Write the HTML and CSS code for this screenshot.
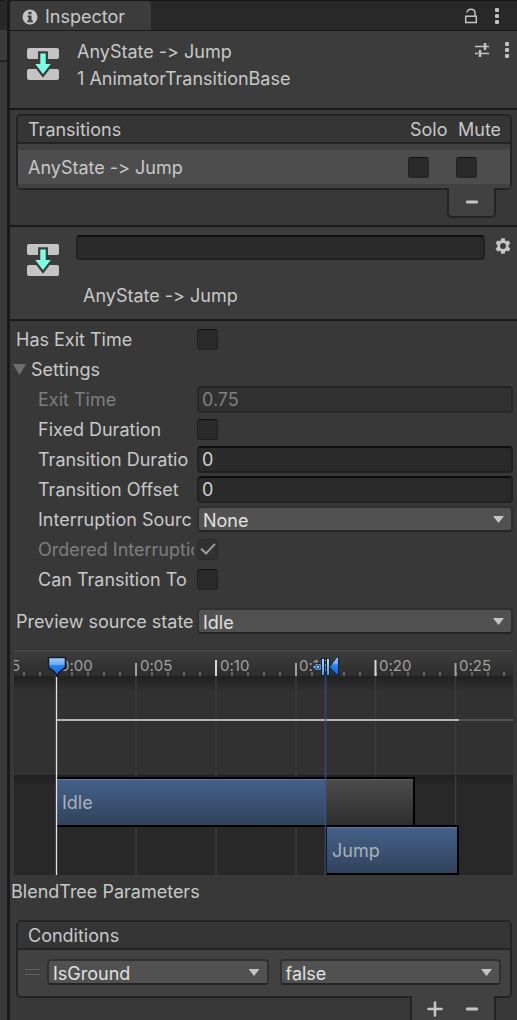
FILE: index.html
```html
<!DOCTYPE html>
<html lang="en">
<head>
<meta charset="utf-8">
<title>Inspector</title>
<link rel="stylesheet" href="styles.css">
</head>
<body>
<svg class="defs" aria-hidden="true">
  <symbol id="transition" viewBox="0 0 32 32">
    <rect width="32" height="11" rx="2" fill="#c4c4c4"/>
    <rect y="21" width="32" height="11" rx="2" fill="#c4c4c4"/>
    <path d="M13.300 5.500h5.400v10.500h5l-7.700 10-7.700-10h5z" fill="#3c3c3c" stroke="#3c3c3c" stroke-width="4.500"/>
    <path d="M13.300 5.500h5.400v10.500h5l-7.700 10-7.700-10h5z" fill="#80ffe5"/>
  </symbol>
  <symbol id="dots" viewBox="0 0 4 16">
    <rect y="0" width="4" height="4" rx="1.300" fill="#c4c4c4"/>
    <rect y="6" width="4" height="4" rx="1.300" fill="#c4c4c4"/>
    <rect y="12" width="4" height="4" rx="1.300" fill="#c4c4c4"/>
  </symbol>
</svg>
<div class="window">
  <div class="neighbour"><div class="neighbour-tab"></div><div class="neighbour-bar"></div></div>
  <main class="inspector">
    <nav class="tabs">
      <button class="tab" type="button">
        <svg width="16" height="16" viewBox="0 0 16 16"><circle cx="8" cy="8" r="7.500" fill="#c4c4c4"/><path d="M6.500 2.800h3v2.500h-3zM5.500 6.500h4v5h1.300v1.700H5.300v-1.700h1.300V8.100H5.500z" fill="#3c3c3c"/></svg>
        Inspector
      </button>
      <div class="tab-tools">
        <button class="icon" type="button" aria-label="Lock"><svg width="14" height="16" viewBox="0 0 14 16" fill="none" stroke="#c4c4c4" stroke-width="1.500"><rect x="1.700" y="8.200" width="10.600" height="6.300"/><path d="M3 4.500C3.300 2.500 5 1.200 7 1.200c2.500 0 4 1.500 4 3.800v3"/></svg></button>
        <button class="icon" type="button" aria-label="Window menu"><svg width="4" height="16"><use href="#dots"/></svg></button>
      </div>
    </nav>

    <header class="asset">
      <svg class="asset-icon" width="32" height="32"><use href="#transition"/></svg>
      <div class="asset-title"><div>AnyState -&gt; Jump</div><div>1 AnimatorTransitionBase</div></div>
      <div class="asset-tools">
        <button class="icon" type="button" aria-label="Presets"><svg width="16" height="16" viewBox="0 0 16 16" stroke="#c4c4c4" fill="none"><path d="M1 4.500h14M1 11.500h3M6 11.500h9" stroke-width="1.300"/><path d="M11 1v7M6 8v7" stroke-width="2.500"/></svg></button>
        <button class="icon" type="button" aria-label="Asset menu"><svg width="4" height="16"><use href="#dots"/></svg></button>
      </div>
    </header>

    <section class="transitions">
      <table class="list">
        <colgroup><col><col class="solo"><col class="mute"></colgroup>
        <thead><tr><th class="name">Transitions</th><th>Solo</th><th><span class="clip">Mute</span></th></tr></thead>
        <tbody><tr><td class="name">AnyState -&gt; Jump</td><td><input class="check" type="checkbox" aria-label="Solo"></td><td><input class="check" type="checkbox" aria-label="Mute"></td></tr></tbody>
      </table>
      <div class="list-buttons single"><button class="icon" type="button" aria-label="Remove transition"><svg width="14" height="14" viewBox="0 0 14 14"><rect x="1" y="5.500" width="12" height="3" rx="1" fill="#c4c4c4"/></svg></button></div>
    </section>

    <section class="transition-head">
      <svg class="asset-icon" width="32" height="32"><use href="#transition"/></svg>
      <div class="naming"><input class="text name-box" type="text" aria-label="Transition name"><div class="caption">AnyState -&gt; Jump</div></div>
      <button class="icon gear" type="button" aria-label="Settings"><svg width="16" height="16" viewBox="0 0 16 16"><path d="M6.300.3h3.400l.5 2.200 1.200.7 2.200-.7 1.700 2.900-1.700 1.600v2l1.700 1.600-1.700 2.900-2.200-.7-1.200.7-.5 2.200H6.300l-.5-2.200-1.200-.7-2.200.7-1.700-2.900L2.400 9V7L.7 5.400l1.700-2.900 2.200.7 1.200-.7zM8 5.100a2.900 2.900 0 1 0 0 5.800 2.900 2.900 0 0 0 0-5.800z" fill="#c4c4c4" fill-rule="evenodd"/></svg></button>
    </section>

    <section class="form">
      <div class="row"><label for="exit">Has Exit Time</label><input id="exit" class="check" type="checkbox"></div>
      <button class="foldout" type="button"><span class="triangle"></span>Settings</button>
      <div class="row sub off"><label for="time">Exit Time</label><input id="time" class="text" type="text" value="0.75" disabled></div>
      <div class="row sub"><label for="fixed">Fixed Duration</label><input id="fixed" class="check" type="checkbox"></div>
      <div class="row sub"><label for="duration">Transition Duratio</label><input id="duration" class="text" type="text" value="0"></div>
      <div class="row sub"><label for="offset">Transition Offset</label><input id="offset" class="text" type="text" value="0"></div>
      <div class="row sub"><label for="source">Interruption Sourc</label><div class="drop"><select id="source"><option>None</option></select></div></div>
      <div class="row sub off"><label for="ordered">Ordered Interruption</label><input id="ordered" class="check" type="checkbox" checked disabled></div>
      <div class="row sub"><label for="self">Can Transition To</label><input id="self" class="check" type="checkbox"></div>
      <div class="row preview"><label for="preview">Preview source state</label><div class="drop"><select id="preview"><option>Idle</option></select></div></div>
    </section>

    <svg class="timeline" width="100%" height="225" role="img" aria-label="Transition timeline">
      <defs>
        <linearGradient id="ruler" x2="0" y2="1"><stop stop-color="#3e3e3e"/><stop offset="1" stop-color="#2c2c2c"/></linearGradient>
        <linearGradient id="shade" x2="0" y2="1"><stop stop-color="#202020"/><stop offset="1" stop-color="#202020" stop-opacity="0"/></linearGradient>
        <linearGradient id="blue" x2="0" y2="1"><stop stop-color="#45618a"/><stop offset="1" stop-color="#30435d"/></linearGradient>
        <linearGradient id="grey" x2="0" y2="1"><stop stop-color="#4c4c4c"/><stop offset="1" stop-color="#2e2e2e"/></linearGradient>
        <linearGradient id="handle" x2="0" y2="1"><stop stop-color="#a8cdf5"/><stop offset=".4" stop-color="#69a8ef"/><stop offset=".42" stop-color="#2f83e8"/><stop offset="1" stop-color="#0868ec"/></linearGradient>
        <linearGradient id="bar" x2="0" y2="1"><stop stop-color="#c0dcf8"/><stop offset="1" stop-color="#4a97ee"/></linearGradient>
        <pattern id="small" x="10" width="16" height="26" patternUnits="userSpaceOnUse"><rect x="-1" y="22" width="2" height="4" fill="#666"/><rect x="15" y="22" width="2" height="4" fill="#666"/></pattern>
      </defs>
      <rect width="100%" height="26" fill="url(#ruler)"/>
      <rect width="100%" height="1" fill="#464646"/>
      <rect y="22" width="100%" height="4" fill="url(#small)"/>
      <rect y="26" width="100%" height="100" fill="#313131"/>
      <rect y="26" width="100%" height="15" fill="url(#shade)"/>
      <rect y="126" width="100%" height="99" fill="#282828"/>
      <rect y="125" width="100%" height="11" fill="url(#shade)"/>
      <rect y="26" width="100%" height="1" fill="#242424"/>
      <path d="M122 27v198M202 27v198M282 27v198M361.500 27v198M441.500 27v198" stroke="#3b3b3b" stroke-width="1.600"/>
      <path d="M122 13v13M282 13v13M441.500 13v13" stroke="#a0a0a0" stroke-width="2"/>
      <path d="M202 10v16M361.500 10v16" stroke="#d8d8d8" stroke-width="2"/>
      <g class="ticks"><text x="-3" y="21">5</text><text x="46" y="21">0:00</text><text x="126" y="21">0:05</text><text x="206" y="21">0:10</text><text x="285" y="21">0:15</text><text x="365" y="21">0:20</text><text x="445" y="21">0:25</text></g>
      <rect x="444" y="69" width="100%" height="2" fill="#505050"/>
      <rect x="43" y="69" width="402" height="2" fill="#b4b4b4"/>
      <rect x="42" y="127" width="359" height="50" fill="#000"/>
      <rect x="43" y="129" width="269" height="46" fill="url(#blue)"/><rect x="43" y="129" width="269" height="1" fill="#5978a2"/>
      <rect x="312" y="129" width="87" height="46" fill="url(#grey)"/><rect x="312" y="129" width="87" height="1" fill="#606060"/>
      <rect x="312" y="175" width="133" height="50" fill="#000"/>
      <rect x="313" y="177" width="130" height="46" fill="url(#blue)"/><rect x="313" y="177" width="130" height="1" fill="#5978a2"/>
      <g class="clips"><text x="48" y="159">Idle</text><text x="318" y="207">Jump</text></g>
      <path d="M311.500 26v199" stroke="#3a5488" stroke-opacity=".6" stroke-width="2"/>
      <path d="M42.500 27v198" stroke="#e4e4e4" stroke-width="1.300"/>
      <path d="M34.500 7.500h17v10l-5 3.500-3.500 4.500-3.500-4.500-5-3.500z" fill="url(#handle)" stroke="#111d2d" stroke-width="1.600"/>
      <path d="M298 17l4.500-3.500h3.500l4 3.500-4 3.500h-3.500z" fill="#6ea5dc" stroke="#10233a"/>
      <circle cx="304" cy="17" r="2" fill="#8fc0f0" stroke="#15304e"/>
      <g stroke="#10233a" stroke-width="1">
        <rect x="307.500" y="8.500" width="3" height="17" fill="url(#bar)"/>
        <rect x="312.500" y="8.500" width="3" height="17" fill="url(#bar)"/>
        <path d="M324.500 7.500v17h-2l-7-7.500 7-9.500z" fill="url(#handle)"/>
      </g>
    </svg>

    <h2 class="params">BlendTree Parameters</h2>

    <section class="conditions">
      <div class="box">
        <h2 class="box-title">Conditions</h2>
        <div class="condition"><span class="grip"></span>
          <div class="drop"><select aria-label="Parameter"><option>IsGround</option></select></div>
          <div class="drop"><select aria-label="Value"><option>false</option></select></div>
        </div>
      </div>
      <div class="list-buttons pair">
        <button class="icon" type="button" aria-label="Add condition"><svg width="16" height="16" viewBox="0 0 16 16"><path d="M8 1.500v13M1.500 8h13" stroke="#c4c4c4" stroke-width="2.600" stroke-linecap="round"/></svg></button>
        <button class="icon" type="button" aria-label="Remove condition"><svg width="14" height="14" viewBox="0 0 14 14"><rect x="1" y="5.500" width="12" height="3" rx="1" fill="#c4c4c4"/></svg></button>
      </div>
    </section>
  </main>
</div>
</body>
</html>
```
FILE: styles.css
```css
* { box-sizing: border-box; }
body {
  margin: 0;
  background: #383838;
  color: #c8c8c8;
  font: 18px/26px Inter, "Liberation Sans", sans-serif;
  font-optical-sizing: none;
  font-feature-settings: "calt" 0;
}
button, input, select { font: inherit; font-optical-sizing: inherit; font-feature-settings: inherit; color: inherit; margin: 0; }
button { border: 0; background: none; padding: 0; }
h2 { margin: 0; font-size: 18px; font-weight: 400; }
svg { display: block; flex: none; }
.defs { position: absolute; width: 0; height: 0; }

.window { display: flex; min-height: 100vh; }
.neighbour { width: 10px; flex: none; border-right: 3px solid #191919; }
.neighbour-tab { height: 30px; background: #282828; border-radius: 0 4px 0 0; border-top: 1px solid #191919; }
.neighbour-bar { height: 32px; background: #3c3c3c; border-bottom: 2px solid #232323; }
.inspector { flex: 1; min-width: 0; }

.tabs { display: flex; justify-content: space-between; height: 31px; background: #282828; border-top: 1px solid #191919; border-bottom: 1px solid #191919; }
.tab { display: flex; align-items: center; gap: 7px; padding: 2px 26px 0 12px; background: #3c3c3c; border-radius: 4px 4px 0 0; white-space: nowrap; }
.tab-tools { display: flex; align-items: center; gap: 17px; padding-right: 18px; }
.icon { display: flex; align-items: center; justify-content: center; }

.asset { display: flex; height: 79px; padding: 7px 8px 0 17px; background: #3c3c3c; border-bottom: 2px solid #1a1a1a; }
.asset-icon { margin-top: 10px; }
.asset-title { flex: 1; margin-left: 18px; line-height: 27px; }
.asset-tools { display: flex; gap: 15px; height: 24px; align-items: center; }

.transitions { padding: 4px 5px 7px 6px; border-bottom: 2px solid #1a1a1a; }
.list { width: 100%; table-layout: fixed; border-spacing: 0; border: 2px solid #242424; border-radius: 5px; background: #353535; }
.list .solo { width: 48px; }
.list .mute { width: 54px; }
.list th { height: 28px; padding: 2px 0 0 2px; border-bottom: 2px solid #242424; font-weight: 400; line-height: 24px; text-align: left; }
.list td { height: 44px; padding: 0; border-top: 6px solid #414141; border-bottom: 4px solid #414141; background: #4d4d4d; }
.list td.name { padding: 2px 0 0 10px; }
.list th.name { padding-left: 10px; }
.list .check { display: block; }
.clip { display: block; overflow: hidden; margin-right: 10px; }
.list-buttons { display: flex; align-items: center; justify-content: center; gap: 22px; margin: -2px 16px 0 auto; position: relative; background: #414141; border: 2px solid #242424; border-top: 0; }
.single { width: 49px; height: 30px; border-radius: 0 0 5px 5px; }

.transition-head { display: flex; align-items: flex-start; height: 94px; padding: 8px 6px 0 17px; background: #3c3c3c; border-bottom: 2px solid #1a1a1a; }
.transition-head .asset-icon { margin-top: 9px; }
.naming { flex: 1; margin: 0 10px 0 17px; min-width: 0; }
.naming .name-box { display: block; height: 25px; }
.caption { margin: 23px 0 0 7px; }
.gear { margin-top: 3px; }

.text { width: 100%; height: 27px; padding: 0 3px; background: #2a2a2a; border: 2px solid #212121; border-top-color: #0d0d0d; border-radius: 4px; color: #d2d2d2; }
.text:disabled { background: #313131; border-color: #292929; border-top-color: #222; color: #808080; }
.check { appearance: none; width: 21px; height: 21px; background: #2a2a2a; border: 1px solid #212121; border-top-color: #111; border-radius: 3px; }
.check:disabled { background: #313131; border-color: #2b2b2b; display: grid; place-items: center; }
.check:checked::before { content: ""; width: 12px; height: 6px; border: solid #a0a0a0; border-width: 0 0 2px 2px; transform: translateY(-2px) rotate(-47deg); }

.form { padding: 3px 4px 0 0; }
.row { display: grid; grid-template-columns: 184px 1fr; column-gap: 3px; align-items: center; height: 30px; }
.row label { overflow: hidden; white-space: nowrap; padding: 1px 0 0 6px; }
.row.sub label { padding-left: 28px; }
.off label { color: #7e7e7e; }
.foldout { display: flex; align-items: center; gap: 5px; height: 30px; padding: 1px 0 0 3px; }
.triangle { width: 13px; height: 11px; background: #6e6e6e; clip-path: polygon(0 0, 100% 0, 50% 100%); }
.preview { margin-top: 12px; }
.drop { position: relative; min-width: 0; }
.drop select { display: block; appearance: none; width: 100%; height: 26px; padding: 0 22px 2px 4px; background: #515151; border: 2px solid #303030; border-bottom-color: #242424; border-radius: 4px; color: #e0e0e0; }
.drop::after { content: ""; position: absolute; right: 9px; top: 10px; width: 11px; height: 7px; background: #c4c4c4; clip-path: polygon(0 0, 100% 0, 50% 100%); pointer-events: none; }

.timeline { width: calc(100% - 8px); margin: 14px 4px 0; overflow: hidden; }
.ticks { font-size: 15px; fill: #a0a0a0; }
.clips { font-size: 18px; fill: #a9b0b9; }
.params { padding: 4px 1px 0; }

.conditions { padding: 15px 5px 0 6px; }
.box { border: 2px solid #242424; border-radius: 5px; background: #414141; }
.box-title { height: 28px; padding: 1px 0 0 10px; background: #353535; border-bottom: 2px solid #242424; }
.condition { display: grid; grid-template-columns: 11px 1fr 1fr; column-gap: 11px; align-items: center; height: 46px; padding: 0 9px 2px 7px; }
.grip { width: 15px; height: 6px; border: solid #606060; border-width: 1px 0; }
.pair { width: 86px; height: 25px; border-bottom: 0; }
```
